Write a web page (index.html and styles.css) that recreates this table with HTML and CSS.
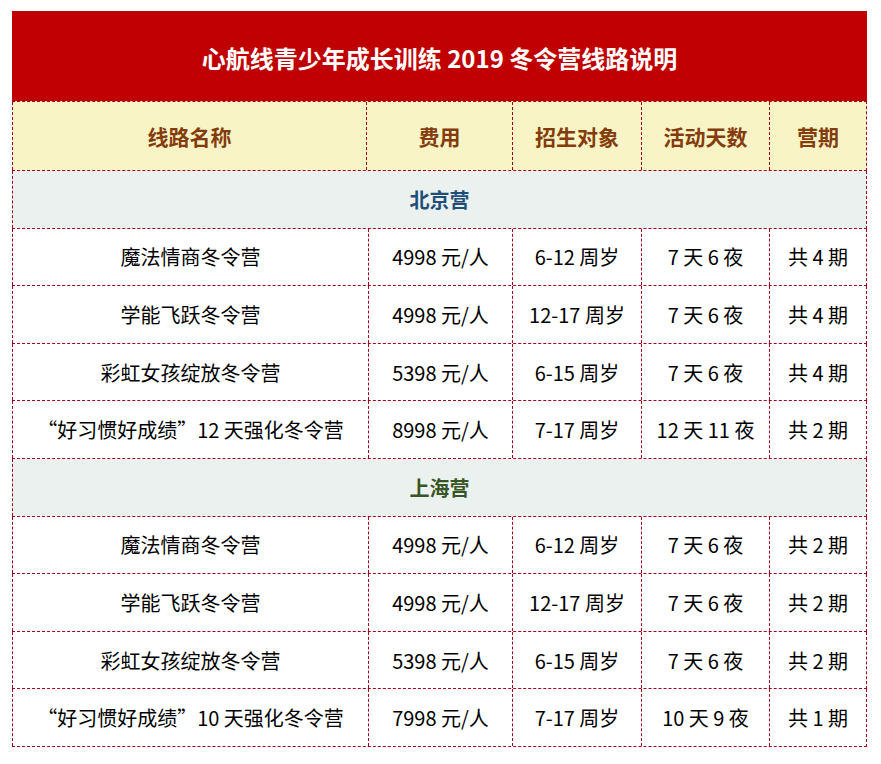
FILE: index.html
```html
<!DOCTYPE html>
<html lang="zh-CN">
<head>
<meta charset="utf-8">
<title>心航线青少年成长训练 2019 冬令营线路说明</title>
<link rel="stylesheet" href="styles.css">
</head>
<body>
<div class="page">
  <div class="sheet">
    <div class="title">心航线青少年成长训练 2019 冬令营线路说明</div>
    <div class="row head">
      <div class="cell">线路名称</div>
      <div class="cell">费用</div>
      <div class="cell">招生对象</div>
      <div class="cell">活动天数</div>
      <div class="cell">营期</div>
    </div>
    <div class="row section bj"><div class="cell">北京营</div></div>
    <div class="row data">
      <div class="cell">魔法情商冬令营</div>
      <div class="cell">4998 元/人</div>
      <div class="cell">6-12 周岁</div>
      <div class="cell">7 天 6 夜</div>
      <div class="cell">共 4 期</div>
    </div>
    <div class="row data">
      <div class="cell">学能飞跃冬令营</div>
      <div class="cell">4998 元/人</div>
      <div class="cell">12-17 周岁</div>
      <div class="cell">7 天 6 夜</div>
      <div class="cell">共 4 期</div>
    </div>
    <div class="row data">
      <div class="cell">彩虹女孩绽放冬令营</div>
      <div class="cell">5398 元/人</div>
      <div class="cell">6-15 周岁</div>
      <div class="cell">7 天 6 夜</div>
      <div class="cell">共 4 期</div>
    </div>
    <div class="row data">
      <div class="cell">“好习惯好成绩”12 天强化冬令营</div>
      <div class="cell">8998 元/人</div>
      <div class="cell">7-17 周岁</div>
      <div class="cell">12 天 11 夜</div>
      <div class="cell">共 2 期</div>
    </div>
    <div class="row section sh"><div class="cell">上海营</div></div>
    <div class="row data">
      <div class="cell">魔法情商冬令营</div>
      <div class="cell">4998 元/人</div>
      <div class="cell">6-12 周岁</div>
      <div class="cell">7 天 6 夜</div>
      <div class="cell">共 2 期</div>
    </div>
    <div class="row data">
      <div class="cell">学能飞跃冬令营</div>
      <div class="cell">4998 元/人</div>
      <div class="cell">12-17 周岁</div>
      <div class="cell">7 天 6 夜</div>
      <div class="cell">共 2 期</div>
    </div>
    <div class="row data">
      <div class="cell">彩虹女孩绽放冬令营</div>
      <div class="cell">5398 元/人</div>
      <div class="cell">6-15 周岁</div>
      <div class="cell">7 天 6 夜</div>
      <div class="cell">共 2 期</div>
    </div>
    <div class="row data">
      <div class="cell">“好习惯好成绩”10 天强化冬令营</div>
      <div class="cell">7998 元/人</div>
      <div class="cell">7-17 周岁</div>
      <div class="cell">10 天 9 夜</div>
      <div class="cell">共 1 期</div>
    </div>
  </div>
</div>
</body>
</html>
```
FILE: styles.css
```css
html, body {
  margin: 0;
  padding: 0;
  background: #ffffff;
}

body {
  font-family: "Noto Sans CJK SC", "Noto Sans", sans-serif;
  color: #000000;
}

.page {
  padding: 11px 0 0 12px;
}

.sheet {
  width: 855px;
  box-sizing: border-box;
}

.title {
  height: 90px;
  background: #c00000;
  color: #ffffff;
  font-size: 24px;
  font-weight: bold;
  display: flex;
  align-items: center;
  justify-content: center;
  padding-top: 2px;
  box-sizing: border-box;
}

.row {
  display: grid;
  box-sizing: border-box;
  border-bottom: 1px dashed #a0001c;
  border-right: 1px dashed #a0001c;
}

.cell {
  display: flex;
  align-items: center;
  justify-content: center;
  border-left: 1px dashed #a0001c;
  white-space: nowrap;
  box-sizing: border-box;
}

.head {
  grid-template-columns: 354px 146px 129px 128px 1fr;
  height: 70px;
  border-top: 1px dashed #a0001c;
  background: #f8f4c6;
  color: #843c0c;
  font-size: 21px;
  font-weight: bold;
}

.section {
  grid-template-columns: 1fr;
  height: 57.6px;
  background: #ebf1ee;
  font-size: 20px;
  font-weight: bold;
}

.bj {
  color: #1f4e79;
}

.sh {
  color: #375623;
}

.data {
  grid-template-columns: 356px 144px 129px 128px 1fr;
  height: 57.6px;
  font-size: 20px;
}
```
